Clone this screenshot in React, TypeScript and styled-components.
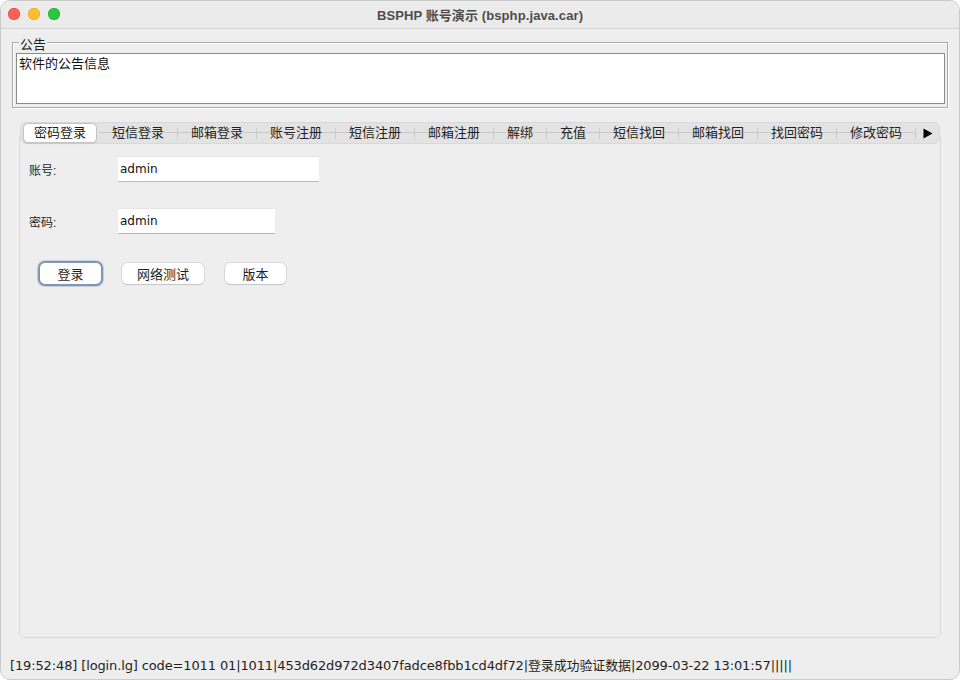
import React from "react";
import styled, { createGlobalStyle } from "styled-components";

const FONT = `"Liberation Sans", "Noto Sans CJK SC", sans-serif`;
const MONO_UI = `"DejaVu Sans", "Noto Sans CJK SC", sans-serif`;

const Global = createGlobalStyle`
  html, body { margin: 0; padding: 0; background: #ffffff; }
  * { box-sizing: border-box; }
  body { font-family: ${FONT}; color: #1f1f1f; }
`;

const Window = styled.div`
  width: 960px;
  height: 680px;
  display: flex;
  flex-direction: column;
  background: #eeeeee;
  border: 1px solid #cacaca;
  border-radius: 10px;
  overflow: hidden;
`;

const TitleBar = styled.div`
  height: 28px;
  flex: none;
  display: grid;
  grid-template-columns: 1fr auto 1fr;
  align-items: center;
  padding: 0 7px 1px 7px;
  background: #ebebeb;
  border-bottom: 1px solid #d2d2d2;
`;

const Lights = styled.div`
  display: flex;
  gap: 8px;
`;

const Light = styled.span<{ $c: string; $b: string }>`
  width: 12px;
  height: 12px;
  border-radius: 50%;
  background: ${(p) => p.$c};
  box-shadow: inset 0 0 0 0.5px ${(p) => p.$b};
`;

const Title = styled.div`
  font-size: 13px;
  font-weight: 700;
  color: #4d4d4d;
  white-space: nowrap;
  letter-spacing: 0.1px;
`;

const Body = styled.div`
  flex: 1;
  display: flex;
  flex-direction: column;
  padding: 2px 11px 0 11px;
  min-height: 0;
`;

const Group = styled.fieldset`
  margin: 0;
  padding: 0 2px 3px 3px;
  border: 1px solid #a9a9a9;
  box-shadow: inset 1px 1px 0 #ffffff, 1px 1px 0 #ffffff;
  min-width: 0;
`;

const Legend = styled.legend`
  margin-left: 3px;
  padding: 6px 1px 0 1px;
  font-size: 13px;
  line-height: 16px;
  color: #1f1f1f;
`;

const Notice = styled.div`
  height: 51px;
  background: #ffffff;
  border: 1px solid #8c8c8c;
  padding: 1px 2px;
  font-size: 13px;
  line-height: 17px;
  color: #111;
`;

const TabArea = styled.div`
  flex: 1;
  display: flex;
  flex-direction: column;
  margin: 14px 7px 0 7px;
  min-height: 0;
`;

const Strip = styled.div`
  align-self: center;
  position: relative;
  z-index: 1;
  display: flex;
  align-items: center;
  height: 22px;
  background: #e3e3e3;
  border: 1px solid #d9d9d9;
  border-radius: 6px;
`;

const Tab = styled.div<{ $active?: boolean }>`
  height: 20px;
  display: flex;
  align-items: center;
  font-size: 13px;
  color: #222222;
  white-space: nowrap;
  ${(p) =>
    p.$active
      ? `
    margin: 0 2px;
    padding: 0 10px;
    background: #ffffff;
    border: 1px solid #c4c4c4;
    border-radius: 5px;
    box-shadow: 0 0.5px 1px rgba(0,0,0,0.08);
  `
      : `
    padding: 0 13px;
    background: linear-gradient(to bottom, transparent 9px, #c8c8c8 9px, #c8c8c8 10px, transparent 10px);
  `}
`;

const TabText = styled.span<{ $active?: boolean }>`
  background: ${(p) => (p.$active ? "#ffffff" : "#e3e3e3")};
  line-height: 16px;
`;

const Sep = styled.span`
  width: 1px;
  height: 11px;
  background: #cbcbcb;
  flex: none;
`;

const Arrow = styled.div`
  width: 23px;
  height: 20px;
  display: flex;
  align-items: center;
  justify-content: center;
`;

const Panel = styled.div`
  flex: 1;
  margin-top: -11px;
  border: 1px solid #dadada;
  border-radius: 5px;
  background: #eeeeee;
  padding: 22px 10px 0 9px;
`;

const Form = styled.div`
  display: grid;
  grid-template-columns: 89px auto;
  row-gap: 26px;
  align-items: center;
  justify-items: start;
`;

const Label = styled.div`
  font-size: 12px;
  color: #262626;
`;

const Field = styled.div<{ $w: number }>`
  width: ${(p) => p.$w}px;
  height: 26px;
  background: #ffffff;
  border-top: 1px solid #e6e6e6;
  border-bottom: 1px solid #b9b9b9;
  padding: 0 2px;
  display: flex;
  align-items: center;
  font-family: ${MONO_UI};
  font-size: 12px;
  color: #111;
`;

const Buttons = styled.div`
  display: flex;
  gap: 21px;
  margin: 29px 0 0 11px;
`;

const Button = styled.div<{ $focus?: boolean }>`
  height: 21px;
  min-width: 61px;
  padding: 0 15px;
  display: flex;
  align-items: center;
  justify-content: center;
  font-size: 13px;
  color: #1f1f1f;
  background: #ffffff;
  border-radius: 5px;
  box-shadow: ${(p) =>
    p.$focus
      ? "0 0 0 2px #7f97b4, 0 0 0 3px rgba(127,151,180,0.35)"
      : "0 0 0 0.5px #c2c2c2, 0 1px 1px rgba(0,0,0,0.15)"};
`;

const Status = styled.div`
  flex: none;
  height: 41px;
  display: flex;
  align-items: center;
  padding: 11px 9px 0 9px;
  font-family: ${MONO_UI};
  font-size: 13px;
  letter-spacing: -0.13px;
  color: #1f1f1f;
  white-space: nowrap;
`;

const tabs = [
  "密码登录",
  "短信登录",
  "邮箱登录",
  "账号注册",
  "短信注册",
  "邮箱注册",
  "解绑",
  "充值",
  "短信找回",
  "邮箱找回",
  "找回密码",
  "修改密码",
];

export default function App() {
  return (
    <>
      <Global />
      <Window>
        <TitleBar>
          <Lights>
            <Light $c="#fe5f57" $b="#e0443e" />
            <Light $c="#febc2e" $b="#dea123" />
            <Light $c="#28c840" $b="#1aab29" />
          </Lights>
          <Title>BSPHP 账号演示 (bsphp.java.car)</Title>
          <div />
        </TitleBar>
        <Body>
          <Group>
            <Legend>公告</Legend>
            <Notice>软件的公告信息</Notice>
          </Group>
          <TabArea>
            <Strip>
              {tabs.map((t, i) => (
                <React.Fragment key={t}>
                  {i > 1 && <Sep />}
                  <Tab $active={i === 0}>
                    <TabText $active={i === 0}>{t}</TabText>
                  </Tab>
                </React.Fragment>
              ))}
              <Sep />
              <Arrow>
                <svg width="10" height="11" viewBox="0 0 10 11">
                  <polygon points="0.5,0.5 9.5,5.5 0.5,10.5" fill="#000" />
                </svg>
              </Arrow>
            </Strip>
            <Panel>
              <Form>
                <Label>账号:</Label>
                <Field $w={201}>admin</Field>
                <Label>密码:</Label>
                <Field $w={157}>admin</Field>
              </Form>
              <Buttons>
                <Button $focus>登录</Button>
                <Button>网络测试</Button>
                <Button>版本</Button>
              </Buttons>
            </Panel>
          </TabArea>
        </Body>
        <Status>
          [19:52:48] [login.lg] code=1011 01|1011|453d62d972d3407fadce8fbb1cd4df72|登录成功验证数据|2099-03-22 13:01:57|||||
        </Status>
      </Window>
    </>
  );
}
